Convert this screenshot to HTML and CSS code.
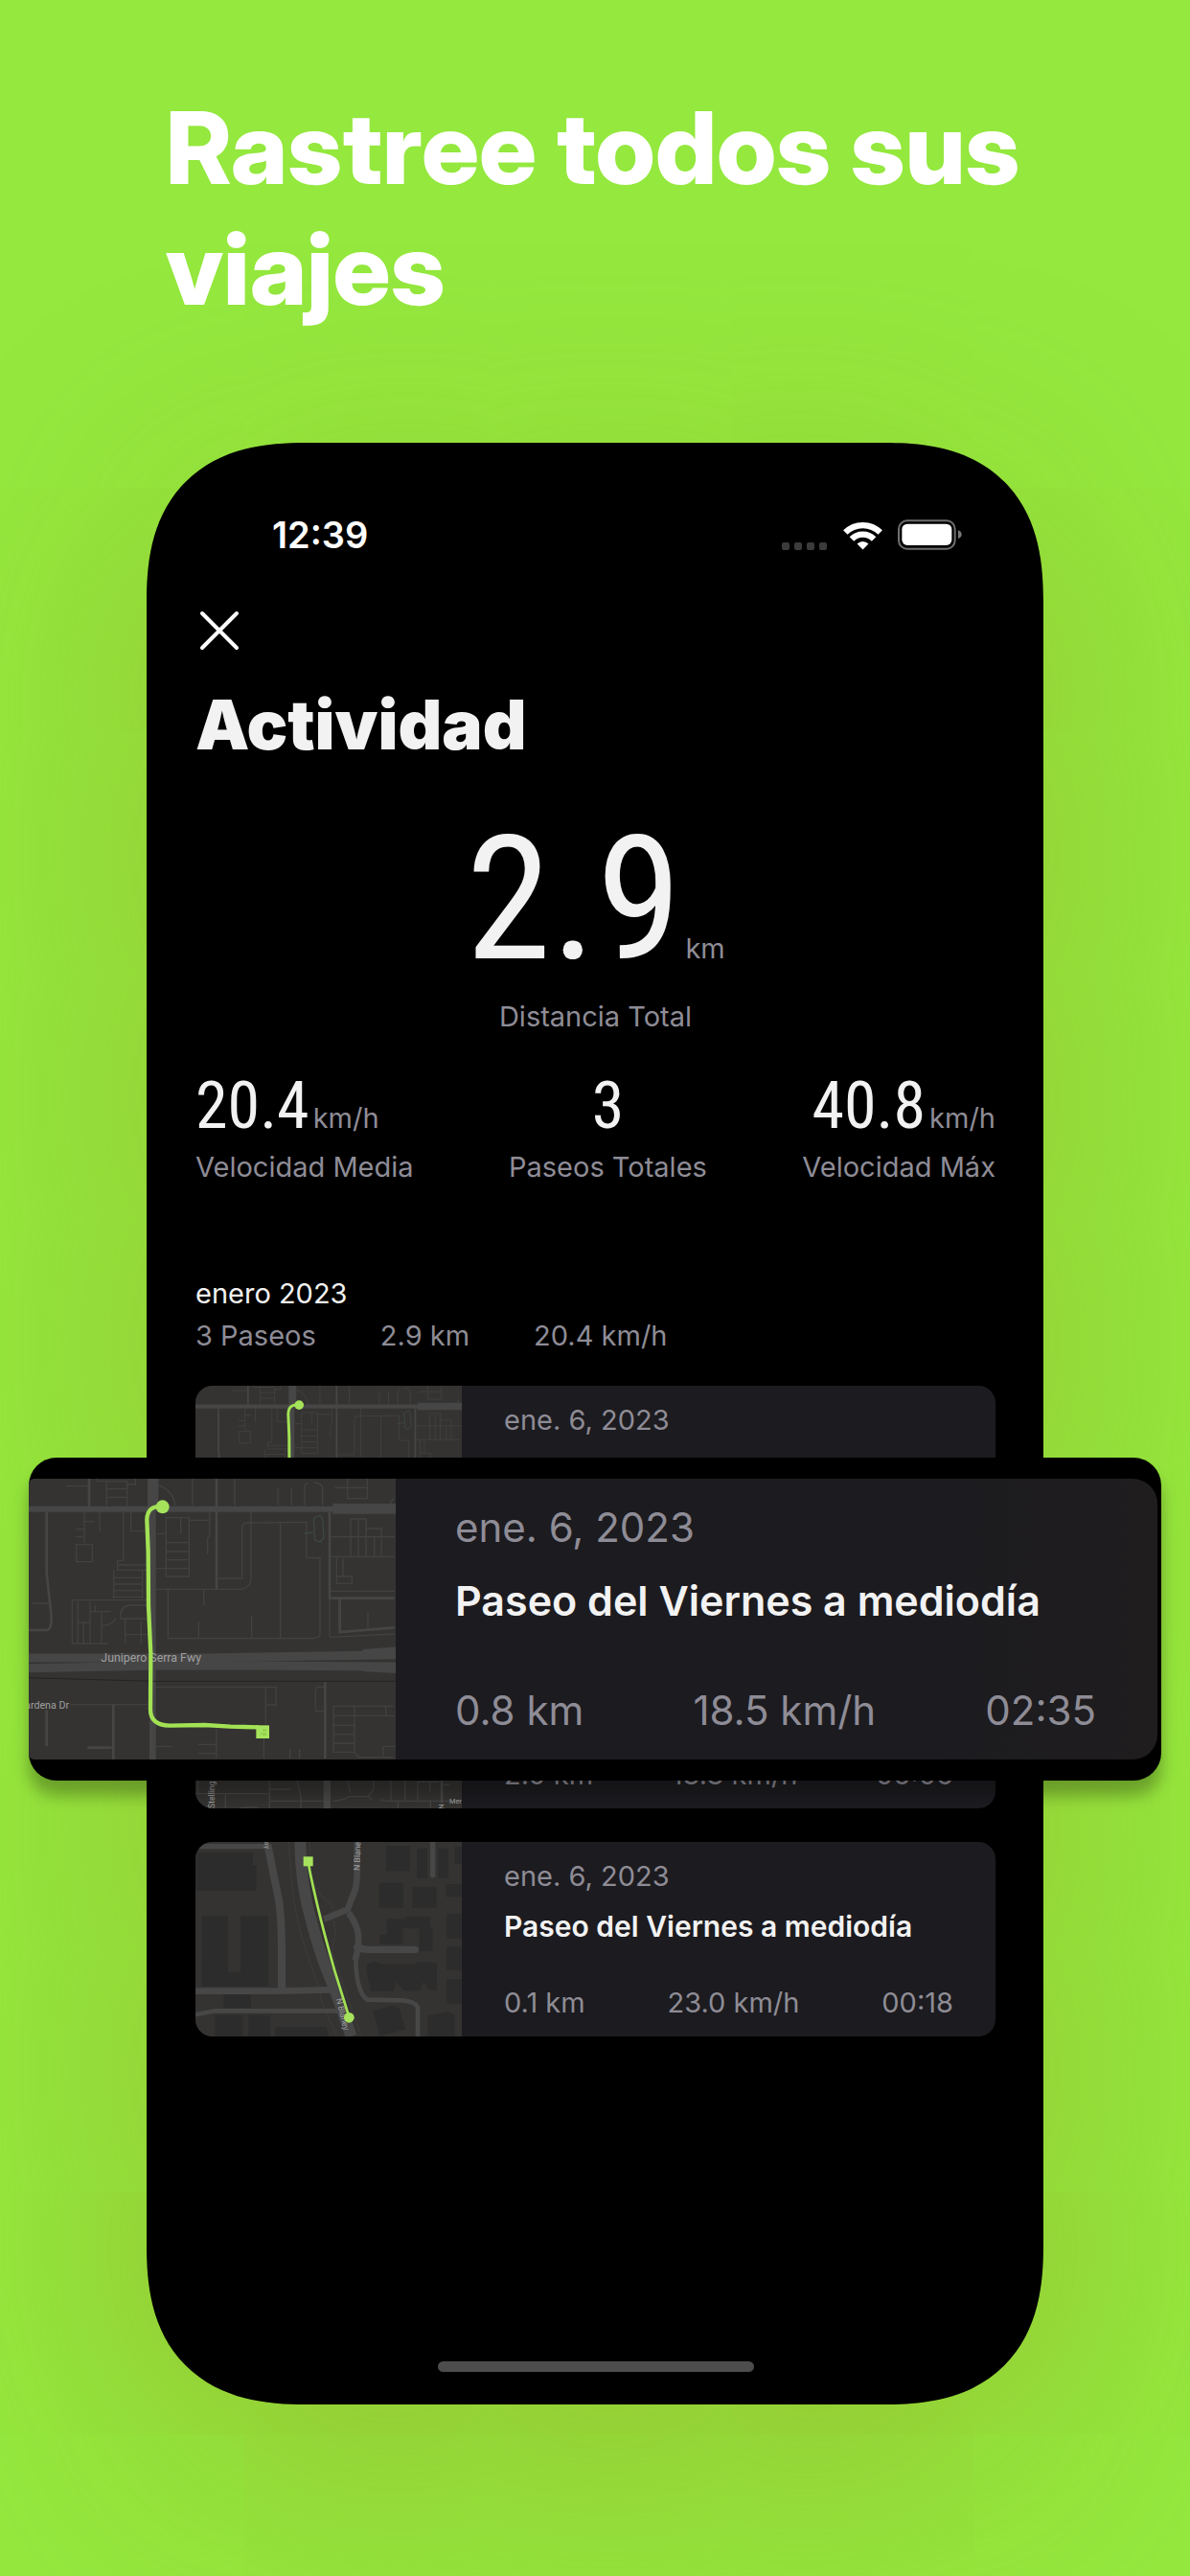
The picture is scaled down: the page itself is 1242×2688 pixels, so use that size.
FILE: index.html
```
<!DOCTYPE html>
<html lang="es">
<head>
<meta charset="utf-8">
<meta name="viewport" content="width=device-width, initial-scale=1">
<title>Rastree todos sus viajes</title>
<link rel="stylesheet" href="styles.css">
</head>
<body>
<!-- Shared map drawings -->
<svg class="defs" aria-hidden="true">
  <defs>
    <g id="map-junipero">
      <rect width="1200" height="880" fill="#343331"/>
      <g fill="none" stroke="#414141" stroke-width="4">
        <path d="M165 23h72M292 32h64M292 58h64M292 84V8h64v78M262 0v8h62M382 0v18h-28M561 0v84M693 0v84M828 28v56M870 28v56M912 84V24q0-8 12-10M968 84V30q-2-16-26-18M1006 28h100M1046 0v62h62V0M1190 60l-14 24"/>
        <path d="M454 20q50 20 52 66M222 104v98M222 134h30M194 158h28M194 182h28M197 206h50v54h-50zM270 104v62M344 104v152h-18v30M368 104v60h50M328 270h90M326 286h90M314 376V286M314 310h90M314 330h90M314 350h90M314 370h90M404 286v90M60 390h50"/>
        <path d="M184 516V380h236M184 516h114M202 384v130M240 384v130M202 450h38M220 450v64M240 416h66M276 420v96M276 460q30 0 44-22M256 396v22M420 396h-60q-28 8-24 42h80M350 440v76M350 488h70M400 446v70"/>
        <path d="M478 122h72v184h-72zM524 122v50M450 172h28M478 200h72M478 228h72M478 254h72M446 281h104M550 130h62M614 104v74l-6 8v50M446 346h264q34-4 34-34V104M636 312h80V150q2-12 18-12l184-2v112h42v236q0 14-20 16H484V346M596 346v50M580 446v54M746 430v70M836 138v362"/>
        <path d="M994 182h200M994 244h200M1056 244V126h48v118M1080 130v114M1104 156h48v88M1130 182v62M1012 244v84h48v-22h-48M1032 250v56M990 352h204M990 494v-120M990 496l204-10M1110 416v54"/>
        <path d="M440 652h382v56h-32v-56M790 708v58M784 812v64M948 652h28M948 652q-6 50 0 76h28M1000 712h190M1002 712v144h66V712M1002 742h192M1002 772h64M1002 800h64M1002 828h64M1068 856l12 16h110M1194 838h-36v34M1166 712v30M446 838h50M578 832h58M578 860h58M636 782v94M866 846v30M896 846v30M180 707h240"/>
      </g>
      <g fill="none" stroke="#454545" stroke-width="8">
        <path d="M237 0v88M636 0v346M990 104v270h204M104 104v190l14 130q4 50-16 50H0M1022 376v104l172-14M976 636v240M104 724v114M313 708v170M232 842h76"/>
      </g>
      <g fill="none" stroke="#464646">
        <path d="M0 95h1200" stroke-width="18"/>
        <path d="M1000 94h200" stroke-width="32"/>
        <path d="M437 0v102" stroke-width="34"/>
        <path d="M436 102v778" stroke-width="20"/>
        <path d="M0 561h600l600-10M0 594l500-10 700 4" stroke-width="27"/>
        <path d="M1095 545l105-8M1095 592l105 6" stroke-width="22"/>
      </g>
      <path d="M0 622l440 12h760" fill="none" stroke="#232323" stroke-width="3"/>
      <path d="M940 124l20-10 8 12 4 60-12 12-16-6zM908 172l30-4" fill="none" stroke="#3c4840" stroke-width="4"/>
      <g fill="#a0a0a0" font-family="'Roboto', sans-serif" font-size="37">
        <text x="274" y="573">Junipero Serra Fwy</text>
        <text x="174" y="719" font-size="32" text-anchor="end">Cardena Dr</text>
      </g>
      <path d="M466 88q-46-6-48 40l4 100 1 170 7 150-1 170q-2 54 60 55l110-2 80 5 90 2" fill="none" stroke="#a2e254" stroke-width="13"/>
      <circle cx="467" cy="88" r="21" fill="#a6e35c"/>
      <rect x="760" y="772" width="41" height="41" fill="#a6e35c"/>
      <path d="M784 784v8M790 784v6M774 798h4M784 796v8M790 796v8" stroke="#7fb93d" stroke-width="3"/>
    </g>
  </defs>
</svg>

<main class="stage">
  <h1 class="headline">Rastree todos sus viajes</h1>

  <section class="phone">
    <div class="status">
      <span class="status-time">12:39</span>
      <span class="status-icons">
        <svg class="dots" viewBox="0 0 48 8" aria-hidden="true" fill="#3b3b3b"><rect width="8" height="8" rx="2"/><rect x="13" width="8" height="8" rx="2"/><rect x="26" width="8" height="8" rx="2"/><rect x="39" width="8" height="8" rx="2"/></svg>
        <svg class="wifi" viewBox="233 36 124 92" aria-hidden="true"><g fill="none" stroke="#fff" stroke-width="19"><path d="M240 73A78 78 0 0 1 350 73"/><path d="M260 94A49 49 0 0 1 330 94"/></g><path d="M295 127l-18-18a25 25 0 0 1 36 0z" fill="#fff"/></svg>
        <svg class="battery" viewBox="405 36 204 96" aria-hidden="true"><rect x="408" y="40" width="176" height="88" rx="26" fill="none" stroke="#6f6f6f" stroke-width="6"/><rect x="418" y="50" width="156" height="67" rx="17" fill="#fff"/><path d="M594 70q11 4 11 13t-11 13z" fill="#777"/></svg>
      </span>
    </div>

    <button class="close" type="button" aria-label="Cerrar">
      <svg viewBox="0 0 50 50" aria-hidden="true"><path d="M7 7l36 36M43 7L7 43" stroke="#fff" stroke-width="4" stroke-linecap="round"/></svg>
    </button>

    <h2 class="title">Actividad</h2>

    <div class="total">
      <p class="total-value"><span class="lcd lcd-large">2.9</span><span class="unit">km</span></p>
      <p class="label">Distancia Total</p>
    </div>

    <div class="stats">
      <div class="stat">
        <p class="stat-value"><span class="lcd">20.4</span><span class="unit">km/h</span></p>
        <p class="label">Velocidad Media</p>
      </div>
      <div class="stat stat-center">
        <p class="stat-value"><span class="lcd">3</span></p>
        <p class="label">Paseos Totales</p>
      </div>
      <div class="stat stat-end">
        <p class="stat-value"><span class="lcd">40.8</span><span class="unit">km/h</span></p>
        <p class="label">Velocidad Máx</p>
      </div>
    </div>

    <h3 class="month">enero 2023</h3>
    <p class="summary"><span>3 Paseos</span><span>2.9 km</span><span>20.4 km/h</span></p>

    <div class="rides">
      <article class="ride">
        <svg class="ride-map" viewBox="0 0 1200 879" preserveAspectRatio="xMidYMid slice" aria-hidden="true"><use href="#map-junipero"/></svg>
        <div class="ride-body">
          <p class="ride-date">ene. 6, 2023</p>
          <h4 class="ride-title">Paseo del Viernes a mediodía</h4>
          <p class="ride-stats"><span>0.8 km</span><span>18.5 km/h</span><span>02:35</span></p>
        </div>
      </article>

      <article class="ride">
        <svg class="ride-map" viewBox="0 0 834 609" preserveAspectRatio="xMidYMid slice" aria-hidden="true">
          <rect width="834" height="609" fill="#343331"/>
          <g fill="none" stroke="#444" stroke-width="4">
            <path d="M0 563h232M8 500v63M94 563v46M232 500v109M232 549h66M232 586h86M318 520l12 50v39M320 586h90M430 586q30 0 50-14h60l18-22v-50M474 500l10 60M540 572l12 10M578 582l20 4h236M612 520v66M656 520v66M696 586v-60h66M734 526v30M770 535h25M634 588v21M736 588v21M140 609q34-8 56 0"/>
          </g>
          <path d="M412 460v149" stroke="#484848" stroke-width="22"/>
          <path d="M771 480v112" stroke="#484848" stroke-width="8"/>
          <g fill="#a0a0a0" font-family="'Roboto', sans-serif">
            <text transform="translate(60 609) rotate(-90)" font-size="26">Stelling</text>
            <text x="795" y="595" font-size="22">Mer</text>
            <text transform="translate(778 612) rotate(-90)" font-size="24">N</text>
          </g>
        </svg>
        <div class="ride-body">
          <p class="ride-date">ene. 6, 2023</p>
          <h4 class="ride-title">Paseo del Viernes a mediodía</h4>
          <p class="ride-stats"><span>2.0 km</span><span>18.8 km/h</span><span>06:06</span></p>
        </div>
      </article>

      <article class="ride">
        <svg class="ride-map" viewBox="0 0 834 609" preserveAspectRatio="xMidYMid slice" aria-hidden="true">
          <rect width="834" height="609" fill="#343331"/>
          <g fill="#2c2c2c">
            <path d="M0 32h180v40h11v81H0zM20 231h82v178h39V231h87v221H19zM597 12h75v79h-75zM693 20h33v94h-33zM760 20h32v94h-32zM812 14h22v54h-22zM575 128h76v78h-76zM679 140h76v66h-76zM784 132h50v40h-50zM786 224h48v78h-48zM599 241h58v-8h78v34h8v74h-42v-70h-52v50h-72v-30h22zM786 328h48v74h-48zM786 430h48v76h-48zM536 384l24-10 20 8h110l6-6 60 2v86l-26-2-16-24-12 28h-50l-24-28-8 30h-70l-14-60zM556 530l60-18 22 8 20 66-80 22zM728 544l62-12 22 8v69h-84zM88 478h86v42H88zM62 542h86v67H62zM166 542h68v67h-68zM250 580h160l8 29H250z"/>
          </g>
          <g fill="none" stroke="#434343" stroke-dasharray="3 4" stroke-width="4">
            <path d="M292 0l14 170q20 140 88 300l-2 24 50 115M358 0v30q0 130 70 164l10 90-10 60 90 265"/>
          </g>
          <g fill="none" stroke="#474747" stroke-linejoin="round">
            <path d="M0 14h218" stroke-width="16"/>
            <path d="M226 8q16 80 36 180 8 60 8 160v116" stroke-width="24"/>
            <path d="M328 0q0 130 38 260 30 110 70 200l52 149" stroke-width="36"/>
            <path d="M0 467h256l170-4" stroke-width="20"/>
            <path d="M0 541l60-12h400" stroke-width="14"/>
            <path d="M506 0v90q0 40-6 60l-24 62-74 30M480 222q28 40 30 70v38l-10 40" stroke-width="20"/>
            <path d="M506 330q20 8 40 7h142" stroke-width="22" stroke-linecap="round"/>
            <path d="M502 350q-2 116 36 144l112 2q44 6 46 24v89" stroke-width="14"/>
            <path d="M743 0v104" stroke-width="16" stroke-linecap="round"/>
          </g>
          <g fill="#a0a0a0" font-family="'Roboto', sans-serif" font-size="26">
            <text transform="translate(514 90) rotate(-88)">N Blaney</text>
            <text transform="translate(440 492) rotate(76)">N Blaney</text>
            <text transform="translate(216 0) rotate(82)" font-size="22">ay</text>
          </g>
          <path d="M355 74q4 26 18 86 22 100 62 240l46 148" fill="none" stroke="#a2e254" stroke-width="8"/>
          <rect x="338" y="46" width="30" height="30" fill="#a6e35c"/>
          <circle cx="481" cy="550" r="16" fill="#a6e35c"/>
        </svg>
        <div class="ride-body">
          <p class="ride-date">ene. 6, 2023</p>
          <h4 class="ride-title">Paseo del Viernes a mediodía</h4>
          <p class="ride-stats"><span>0.1 km</span><span>23.0 km/h</span><span>00:18</span></p>
        </div>
      </article>

      <!-- Enlarged copy of the first ride, laid over the list -->
      <aside class="callout">
        <div class="callout-panel">
          <svg class="callout-map" viewBox="48 0 1149 879" preserveAspectRatio="xMidYMid slice" aria-hidden="true"><use href="#map-junipero"/></svg>
          <div class="callout-body">
            <p class="ride-date">ene. 6, 2023</p>
            <h4 class="ride-title">Paseo del Viernes a mediodía</h4>
            <p class="ride-stats"><span>0.8 km</span><span>18.5 km/h</span><span>02:35</span></p>
          </div>
        </div>
      </aside>
    </div>

    <div class="home-bar"></div>
  </section>
</main>
</body>
</html>
```
FILE: styles.css
```
* {
  box-sizing: border-box;
  margin: 0;
  padding: 0;
}

body {
  min-height: 100vh;
  background: #94e83e;
  color: #f2f2f2;
  font-family: Inter, "Liberation Sans", sans-serif;
  font-size: 29px;
  line-height: 36px;
  overflow-x: hidden;
}

.defs {
  position: absolute;
  width: 0;
  height: 0;
}

.stage {
  padding: 91px 153px 179px;
  overflow: hidden;
}

.headline {
  padding: 0 20px;
  color: #fff;
  font-family: "Inter Display", Inter, sans-serif;
  font-size: 105px;
  font-weight: 800;
  line-height: 126px;
}

.phone {
  margin-top: 119px;
  padding: 78px 50px 34px 51px;
  border-radius: 138px;
  background: #000;
  box-shadow: 0 60px 300px rgba(152, 140, 30, 0.48);
}

@supports (corner-shape: superellipse(1.3)) {
  .phone {
    border-radius: 166px;
    corner-shape: superellipse(1.3);
  }
}

/* Status bar */
.status {
  display: flex;
  align-items: center;
  justify-content: space-between;
  height: 36px;
  padding: 0 34px 0 80px;
  color: #fff;
}

.status-time {
  font-size: 38px;
  font-weight: 600;
}

.status-icons {
  display: flex;
  align-items: center;
  gap: 16px;
}

.dots {
  align-self: flex-end;
  width: 48px;
  height: 8px;
}

.wifi {
  width: 41px;
  height: 31px;
}

.battery {
  width: 68px;
  height: 32px;
}

.close {
  display: block;
  width: 60px;
  height: 50px;
  margin-top: 57px;
  border: 0;
  background: none;
  text-align: left;
  cursor: pointer;
}

.close svg {
  display: block;
  width: 50px;
  height: 50px;
}

.title {
  margin-top: 30px;
  font-size: 71px;
  font-weight: 900;
  line-height: 86px;
}

/* Totals */
.lcd {
  font-family: "Roboto Condensed", Roboto, sans-serif;
  font-size: 68px;
  line-height: 56px;
}

.lcd-large {
  font-size: 180px;
  line-height: 152px;
}

.label,
.unit,
.summary {
  color: #8e8c96;
}

.unit {
  line-height: 24px;
}

.total {
  margin-top: 64px;
  text-align: center;
}

.total-value {
  display: flex;
  align-items: baseline;
  justify-content: center;
  gap: 4px;
}

.total .label {
  margin-top: 28px;
}

.stats {
  display: flex;
  justify-content: space-between;
  margin-top: 47px;
}

.stat-value {
  display: flex;
  align-items: baseline;
  gap: 4px;
}

.stat-center .stat-value {
  justify-content: center;
}

.stat-end .stat-value {
  justify-content: flex-end;
}

.stat .label {
  margin-top: 18px;
}

/* Ride list */
.month {
  margin-top: 96px;
  font-size: 29px;
  font-weight: 400;
}

.summary {
  display: flex;
  gap: 67px;
  margin-top: 8px;
}

.rides {
  position: relative;
  display: flex;
  flex-direction: column;
  gap: 35px;
  margin-top: 34px;
}

.ride {
  display: flex;
  border-radius: 18px;
  background: #1c1b1f;
  overflow: hidden;
}

.ride-map {
  flex: none;
  width: 278px;
  height: 203px;
}

.ride-body {
  flex: 1;
  padding: 18px 44px 17px;
}

.ride-date,
.ride-stats {
  color: #8e8c96;
}

.ride-title {
  margin-top: 16px;
  font-size: 30px;
  font-weight: 600;
}

.ride-stats {
  display: flex;
  justify-content: space-between;
  margin-top: 44px;
}

.callout {
  position: absolute;
  top: 75px;
  right: -173px;
  left: -174px;
  padding: 22px 4px 22px 0;
  border-radius: 29px;
  background: #000;
  box-shadow: 0 16px 16px rgba(0, 0, 0, 0.28);
}

.callout-panel {
  display: flex;
  border-radius: 6px 26px 26px 6px;
  background: linear-gradient(90deg, #1c1b1f 80%, #1f1d1e);
  overflow: hidden;
  font-size: 42px;
  line-height: 52px;
}

.callout-map {
  flex: none;
  width: 383px;
  height: 293px;
}

.callout-body {
  flex: 1;
  padding: 25px 64px 24px 62px;
}

.callout .ride-title {
  margin-top: 24px;
  font-size: 43px;
}

.callout .ride-stats {
  margin-top: 63px;
}

.home-bar {
  width: 330px;
  height: 11px;
  margin: 339px auto 0;
  border-radius: 6px;
  background: #4d4d4d;
}
```
